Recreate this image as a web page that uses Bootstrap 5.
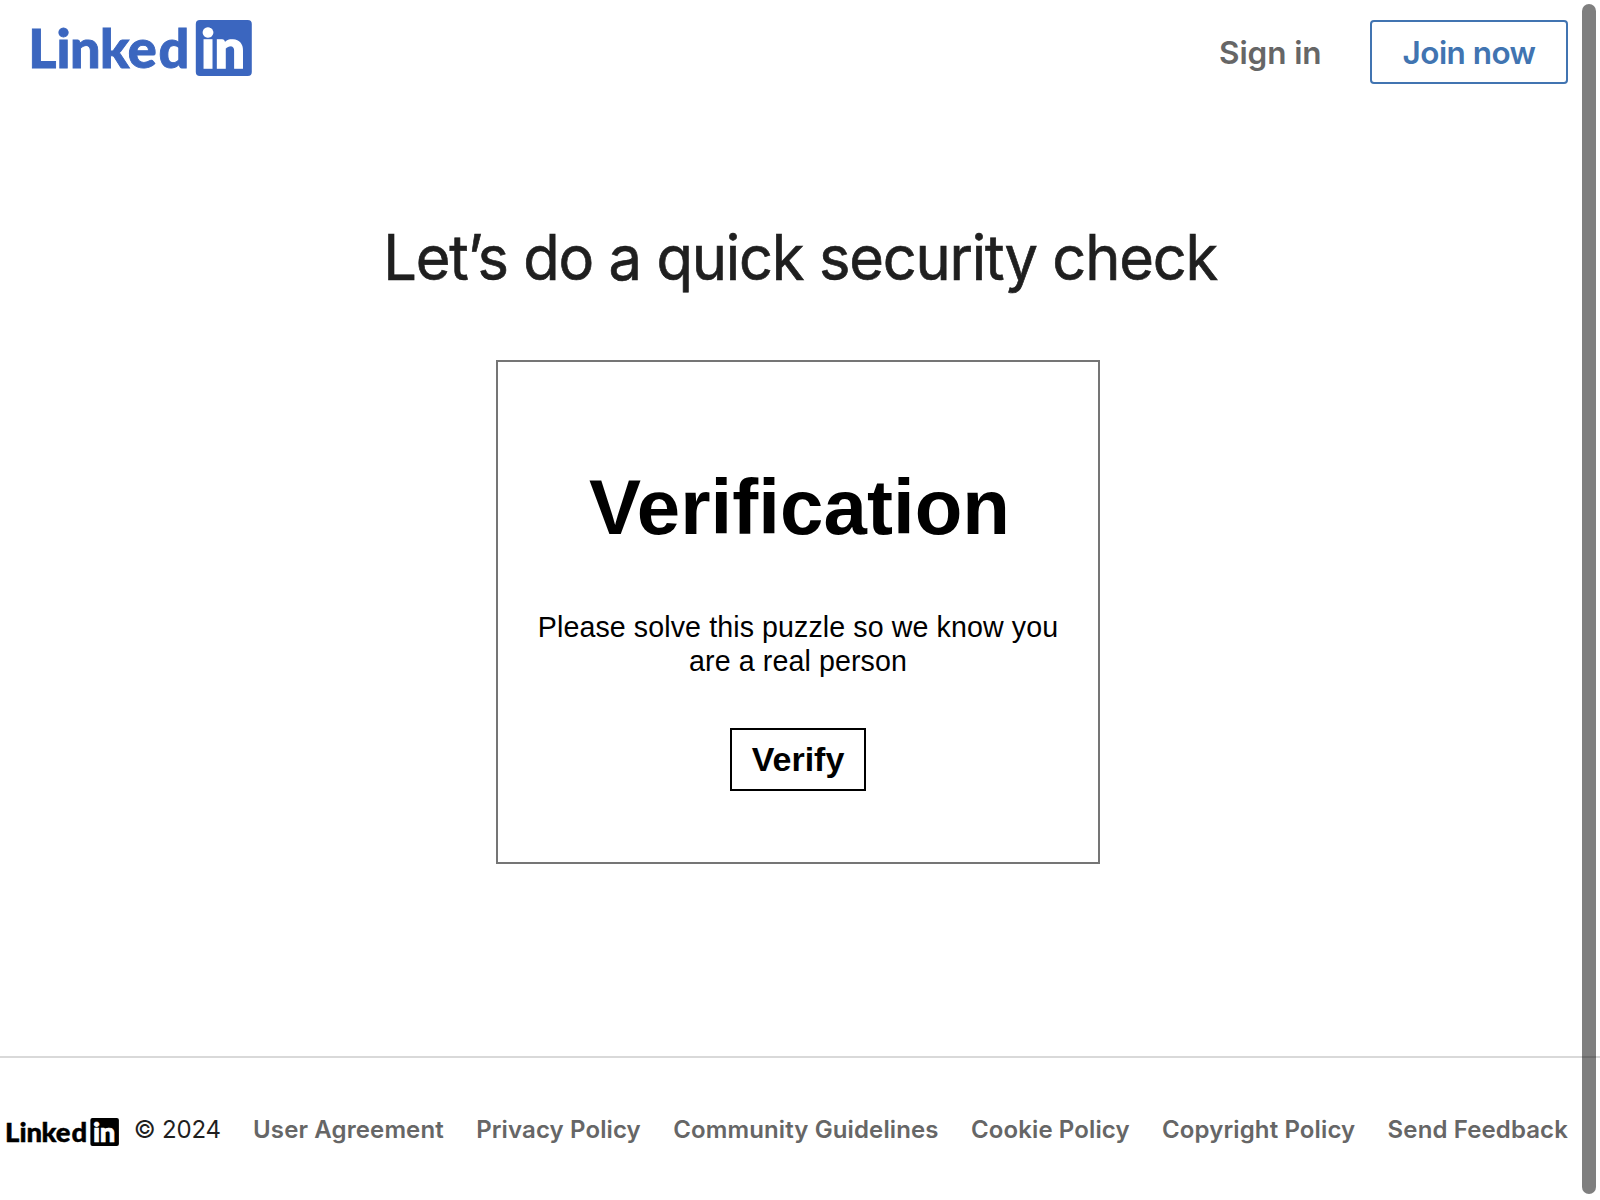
<!DOCTYPE html>
<html lang="en">
<head>
<meta charset="utf-8">
<meta name="viewport" content="width=device-width, initial-scale=1">
<title>Security Verification | LinkedIn</title>
<link href="https://cdn.jsdelivr.net/npm/bootstrap@5.3.0/dist/css/bootstrap.min.css" rel="stylesheet">
<style>
body{font-family:Inter,"Liberation Sans",sans-serif;height:1200px;overflow:hidden;color:#1f1f1f;background:#fff}
.wordmark{display:block;flex:none;overflow:visible}
.wordmark text{font-family:Lato,sans-serif;font-weight:900;font-size:54px}
.wordmark .ink{fill:currentColor;stroke:currentColor;stroke-width:.9px}
.wordmark .knockout{fill:#fff;stroke:#fff;stroke-width:1.4px}
.brand-blue{color:#3b66bf}
.top-bar{padding:20px 32px 0;height:84px}
.link-signin{font-size:31.5px;font-weight:600;letter-spacing:-.1px;color:#666;margin-right:48.5px;padding-top:2px}
.btn-join{width:198px;height:64px;padding:1px 0 0;border:2px solid #4174b1;border-radius:4px;color:#4174b1;font-size:31.5px;font-weight:600;letter-spacing:-.55px;line-height:60px}
.page-title{font-size:63px;font-weight:400;line-height:76px;letter-spacing:-1.24px;margin:135px 0 0;white-space:nowrap;transform:scaleX(.945);-webkit-text-stroke:.7px currentColor}
.challenge{width:604px;height:504px;border:2px solid #757575;margin:65px 0 0 -4px;font-family:"Liberation Sans",Arial,sans-serif;color:#000}
.challenge h2{font-size:78px;font-weight:700;line-height:90px;letter-spacing:.05px;margin:100px 0 0;padding-left:3px}
.challenge p{font-size:28.6px;line-height:34px;letter-spacing:.1px;margin:58px 30px 0}
.btn-verify{width:136px;height:63px;padding:0;border:2px solid #000;border-radius:0;color:#000;font-size:34px;font-weight:700;line-height:59px;margin-top:50px}
.site-footer{height:144px;border-top:2px solid #d9d9d9;padding:2px 32px 0 7px;font-size:24px;line-height:32px}
.site-footer .wordmark{margin-top:4px}
.site-footer a{color:#666;font-weight:600;letter-spacing:.12px}
.site-footer ul{gap:32.3px}
.copyright{letter-spacing:-.2px}
.scroll-thumb{position:absolute;top:4px;right:4px;width:14px;height:1190px;border-radius:7px;background:rgba(0,0,0,.5)}
</style>
</head>
<body class="d-flex flex-column position-relative">
<header class="top-bar d-flex justify-content-between align-items-start">
  <a href="#" class="brand-blue" aria-label="LinkedIn">
    <svg class="wordmark" width="220" height="56" viewBox="32 20 220 56">
      <text class="ink" y="67.7" x="28.2 56.5 70.1 100 127.8 158.6">Linked</text>
      <rect x="195.8" y="20" width="56" height="56" rx="4" fill="currentColor"/>
      <text class="knockout" y="67.7" x="201 214.4">in</text>
    </svg>
  </a>
  <nav class="d-flex align-items-center">
    <a href="#" class="link-signin text-decoration-none">Sign in</a>
    <a href="#" class="btn btn-join">Join now</a>
  </nav>
</header>
<main class="flex-grow-1 d-flex flex-column align-items-center">
  <h1 class="page-title">Let’s do a quick security check</h1>
  <section class="challenge text-center">
    <h2>Verification</h2>
    <p>Please solve this puzzle so we know you are a real person</p>
    <button type="button" class="btn btn-verify">Verify</button>
  </section>
</main>
<footer class="site-footer d-flex align-items-center justify-content-between">
  <svg class="wordmark text-black" width="112" height="28" viewBox="32 20 220 56" preserveAspectRatio="none">
    <text class="ink" y="67.7" x="28.2 56.5 70.1 100 127.8 158.6">Linked</text>
    <rect x="195.8" y="20" width="56" height="56" rx="4" fill="currentColor"/>
    <text class="knockout" y="67.7" x="201 214.4">in</text>
  </svg>
  <ul class="list-unstyled d-flex mb-0 text-nowrap">
    <li class="copyright">© 2024</li>
    <li><a href="#" class="text-decoration-none">User Agreement</a></li>
    <li><a href="#" class="text-decoration-none">Privacy Policy</a></li>
    <li><a href="#" class="text-decoration-none">Community Guidelines</a></li>
    <li><a href="#" class="text-decoration-none">Cookie Policy</a></li>
    <li><a href="#" class="text-decoration-none">Copyright Policy</a></li>
    <li><a href="#" class="text-decoration-none">Send Feedback</a></li>
  </ul>
</footer>
<div class="scroll-thumb"></div>
<script src="https://cdn.jsdelivr.net/npm/bootstrap@5.3.0/dist/js/bootstrap.bundle.min.js"></script>
</body>
</html>
